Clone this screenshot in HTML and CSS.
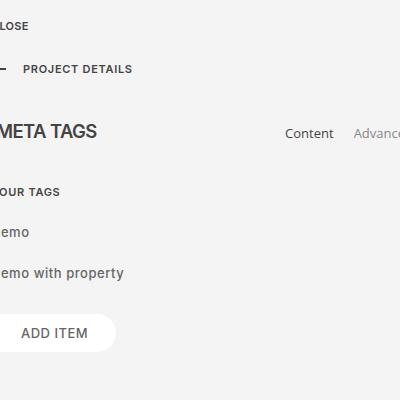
FILE: index.html
```html
<!DOCTYPE html>
<html>
<head>
<meta charset="utf-8">
<link rel="stylesheet" href="styles.css">
</head>
<body>
<div class="panel">
  <div class="close">CLOSE</div>
  <div class="crumb">
    <span class="dash"></span>
    <span class="crumb-label">PROJECT DETAILS</span>
  </div>
  <div class="head">
    <h1 class="title">META TAGS</h1>
    <nav class="tabs">
      <span class="tab active">Content</span>
      <span class="tab">Advanced</span>
    </nav>
  </div>
  <div class="section-label">YOUR TAGS</div>
  <ul class="items">
    <li class="item">Demo</li>
    <li class="item">Demo with property</li>
  </ul>
  <button class="add">ADD ITEM</button>
</div>
</body>
</html>
```
FILE: styles.css
```css
html, body {
  margin: 0;
  padding: 0;
  background: #f4f4f4;
  overflow: hidden;
}
.panel {
  width: 420px;
  margin-left: -9px;
  padding-top: 16px;
  font-family: "Inter", "DejaVu Sans", sans-serif;
  color: #444;
}
.close {
  font-size: 11px;
  font-weight: 600;
  line-height: 20px;
  letter-spacing: 0.3px;
}
.crumb {
  display: flex;
  align-items: center;
  margin-top: 23px;
  height: 20px;
}
.dash {
  width: 15px;
  height: 2px;
  background: #444;
  margin-right: 17px;
}
.crumb-label {
  font-size: 11px;
  font-weight: 600;
  letter-spacing: 0.7px;
}
.head {
  display: flex;
  align-items: baseline;
  justify-content: space-between;
  margin-top: 40px;
}
.title {
  margin: 0 0 0 5px;
  font-size: 18.5px;
  font-weight: 600;
  line-height: 24px;
  letter-spacing: -0.6px;
}
.tabs {
  display: flex;
  gap: 20px;
  font-family: "Open Sans", sans-serif;
  font-size: 13px;
  margin-right: -2px;
}
.tab { color: #888; }
.tab.active { color: #444; }
.section-label {
  margin-top: 39px;
  font-size: 11px;
  font-weight: 600;
  line-height: 20px;
  letter-spacing: 0.7px;
}
.items {
  list-style: none;
  margin: 20px 0 0;
  padding: 0;
}
.item {
  font-size: 13px;
  font-weight: 500;
  color: #666;
  line-height: 20px;
  margin-bottom: 21px;
  letter-spacing: 0.55px;
}
.add {
  display: block;
  margin-top: 31px;
  margin-left: -10px;
  height: 38px;
  width: 135px;
  padding: 0 0 0 40px;
  border: none;
  border-radius: 19px;
  background: #fff;
  color: #666;
  font-family: "Inter", "DejaVu Sans", sans-serif;
  font-size: 13px;
  font-weight: 500;
  letter-spacing: 0.5px;
  text-align: left;
}
```
